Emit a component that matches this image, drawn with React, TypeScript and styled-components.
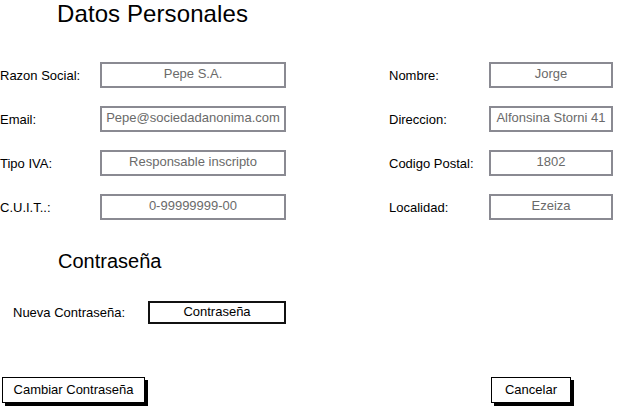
import React from "react";
import styled, { createGlobalStyle } from "styled-components";

const Global = createGlobalStyle`
  html, body { margin: 0; padding: 0; background: #fff; }
  body { font-family: "Liberation Sans", Arial, sans-serif; color: #000; }
`;

const Page = styled.div`
  width: 618px;
  height: 407px;
  overflow: hidden;
  display: flex;
  flex-direction: column;
`;

const Title = styled.h1`
  margin: 0 0 0 57px;
  font-size: 24px;
  line-height: 27px;
  font-weight: normal;
  letter-spacing: 0.1px;
`;

const FormGrid = styled.div`
  margin-top: 35px;
  display: grid;
  grid-template-columns: 100px 186px 103px 100px 124px;
  grid-auto-rows: 26px;
  row-gap: 18px;
  align-items: center;
`;

const Label = styled.span<{ $indent?: number }>`
  font-size: 13px;
  white-space: nowrap;
  padding-left: ${(p) => p.$indent ?? 0}px;
`;

const Field = styled.div`
  box-sizing: border-box;
  height: 26px;
  border: 2px solid #8a8a92;
  display: flex;
  align-items: center;
  justify-content: center;
  font-size: 13px;
  color: #6a6a6a;
  white-space: nowrap;
  padding-bottom: 3px;
`;

const SubTitle = styled.h2`
  margin: 30px 0 0 58px;
  font-size: 20px;
  line-height: 23px;
  font-weight: normal;
`;

const PasswordRow = styled.div`
  margin-top: 28px;
  display: grid;
  grid-template-columns: 148px 138px;
  align-items: center;
`;

const PasswordBox = styled.div`
  box-sizing: border-box;
  height: 23px;
  border: 2px solid #111;
  display: flex;
  align-items: center;
  justify-content: center;
  font-size: 13px;
  padding-bottom: 2px;
`;

const ButtonBar = styled.div`
  margin-top: 53px;
  display: flex;
  align-items: flex-start;
  padding-left: 2px;
  padding-right: 47px;
`;

const Button = styled.button<{ $width: number; $push?: boolean }>`
  box-sizing: border-box;
  width: ${(p) => p.$width}px;
  height: 26px;
  margin-left: ${(p) => (p.$push ? "auto" : "0")};
  border: 1.5px solid #000;
  box-shadow: 3px 3px 0 #000;
  background: #fff;
  font-family: "Liberation Sans", Arial, sans-serif;
  font-size: 13px;
  color: #000;
  padding: 0 0 2px;
`;

const left = [
  ["Razon Social:", "Pepe S.A."],
  ["Email:", "Pepe@sociedadanonima.com"],
  ["Tipo IVA:", "Responsable inscripto"],
  ["C.U.I.T..:", "0-99999999-00"],
];
const right = [
  ["Nombre:", "Jorge"],
  ["Direccion:", "Alfonsina Storni 41"],
  ["Codigo Postal:", "1802"],
  ["Localidad:", "Ezeiza"],
];

export default function App() {
  return (
    <Page>
      <Global />
      <Title>Datos Personales</Title>
      <FormGrid>
        {left.map(([l, v], i) => (
          <React.Fragment key={l}>
            <Label>{l}</Label>
            <Field>{v}</Field>
            <span />
            <Label>{right[i][0]}</Label>
            <Field>{right[i][1]}</Field>
          </React.Fragment>
        ))}
      </FormGrid>
      <SubTitle>Contraseña</SubTitle>
      <PasswordRow>
        <Label $indent={13}>Nueva Contraseña:</Label>
        <PasswordBox>Contraseña</PasswordBox>
      </PasswordRow>
      <ButtonBar>
        <Button $width={143}>Cambiar Contraseña</Button>
        <Button $width={80} $push>
          Cancelar
        </Button>
      </ButtonBar>
    </Page>
  );
}
